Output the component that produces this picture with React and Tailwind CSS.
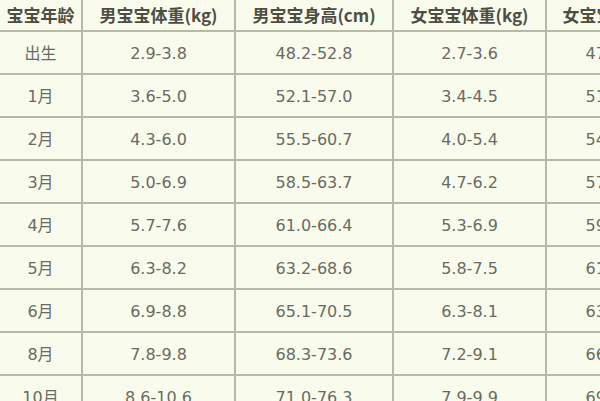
import React from 'react';

const columns = [
  { title: '宝宝年龄', w: 'w-[83px]' },
  { title: '男宝宝体重(kg)', w: 'w-[153px]' },
  { title: '男宝宝身高(cm)', w: 'w-[158px]' },
  { title: '女宝宝体重(kg)', w: 'w-[153px]' },
  { title: '女宝宝身高(cm)', w: 'w-[156px]' },
];

const rows = [
  ['出生', '2.9-3.8', '48.2-52.8', '2.7-3.6', '47.7-52.0'],
  ['1月', '3.6-5.0', '52.1-57.0', '3.4-4.5', '51.2-55.8'],
  ['2月', '4.3-6.0', '55.5-60.7', '4.0-5.4', '54.4-59.2'],
  ['3月', '5.0-6.9', '58.5-63.7', '4.7-6.2', '57.1-59.5'],
  ['4月', '5.7-7.6', '61.0-66.4', '5.3-6.9', '59.4-64.5'],
  ['5月', '6.3-8.2', '63.2-68.6', '5.8-7.5', '61.5-66.7'],
  ['6月', '6.9-8.8', '65.1-70.5', '6.3-8.1', '63.3-68.6'],
  ['8月', '7.8-9.8', '68.3-73.6', '7.2-9.1', '66.4-71.8'],
  ['10月', '8.6-10.6', '71.0-76.3', '7.9-9.9', '69.0-74.5'],
];

const font = { fontFamily: '"DejaVu Sans", "Noto Sans CJK SC", sans-serif' };

export default function App() {
  return (
    <div className="w-[600px] h-[401px] overflow-hidden bg-[#f9fcec]" style={font}>
      <div className="w-[720px]">
        {/* header */}
        <div className="flex h-[32px] border-b-2 border-[#b7baa2]">
          {columns.map((c) => (
            <div
              key={c.title}
              className={`${c.w} shrink-0 border-r-2 border-[#b7baa2] flex items-center justify-center pb-[1px] text-[17px] font-bold text-[#4d4d44] whitespace-nowrap`}
              style={{ fontFamily: '"Noto Sans CJK SC", "DejaVu Sans", sans-serif' }}
            >
              {c.title}
            </div>
          ))}
        </div>

        {/* data rows */}
        {rows.map((r) => (
          <div key={r[0]} className="flex h-[43px] border-b-2 border-[#b7baa2]">
            {r.map((v, i) => (
              <div
                key={i}
                className={`${columns[i].w} shrink-0 border-r-2 border-[#b7baa2] flex items-center justify-center pt-[3px] text-[16px] text-[#6a6a64] whitespace-nowrap`}
              >
                {v}
              </div>
            ))}
          </div>
        ))}
      </div>
    </div>
  );
}
